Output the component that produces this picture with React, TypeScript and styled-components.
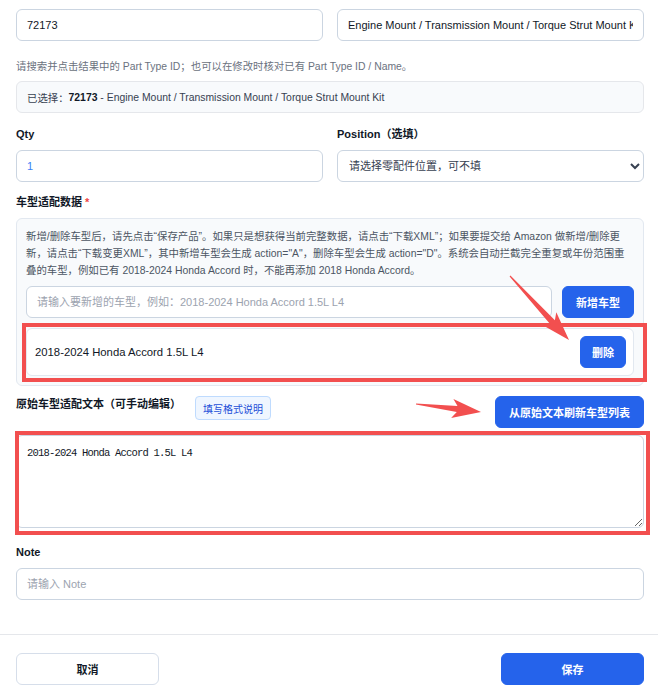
import { createGlobalStyle } from "styled-components";
import styled from "styled-components";

const GlobalStyle = createGlobalStyle`
  body {
    margin: 0;
    background: #fff;
    font-family: "Liberation Sans", "Noto Sans CJK SC", sans-serif;
    color: #111827;
  }
`;

const blue = "#2563eb";
const red = "#f24f4f";
const font = `"Liberation Sans", "Noto Sans CJK SC", sans-serif`;

type Pt = [number, number];

// callout arrow: thin tail, widening shaft, notched head
function arrowPath(tail: Pt, tip: Pt) {
  const dx = tip[0] - tail[0];
  const dy = tip[1] - tail[1];
  const len = Math.hypot(dx, dy);
  const u: Pt = [dx / len, dy / len];
  const n: Pt = [-u[1], u[0]];
  const at = (d: number, w: number): string =>
    `${(tip[0] - u[0] * d + n[0] * w).toFixed(1)} ${(tip[1] - u[1] * d + n[1] * w).toFixed(1)}`;
  return [
    `M${at(len, 0.6)}`,
    `L${at(24, 3)}`,
    `L${at(29, 9.5)}`,
    `L${at(0, 0)}`,
    `L${at(29, -9.5)}`,
    `L${at(24, -3)}`,
    `L${at(len, -0.6)}`,
    "Z",
  ].join(" ");
}

export default function App() {
  return (
    <Page>
      <GlobalStyle />
      <Form>
        <Grid>
          <Input defaultValue="72173" />
          <Input defaultValue="Engine Mount / Transmission Mount / Torque Strut Mount Kit" />
        </Grid>
        <Hint>请搜索并点击结果中的 Part Type ID；也可以在修改时核对已有 Part Type ID / Name。</Hint>
        <Selected>
          已选择：<b>72173</b> - Engine Mount / Transmission Mount / Torque Strut Mount Kit
        </Selected>

        <Grid $top={13}>
          <Field>
            <Label>Qty</Label>
            <Input defaultValue="1" $color="#3b82f6" />
          </Field>
          <Field>
            <Label>Position（选填）</Label>
            <Select defaultValue="">
              <option value="">请选择零配件位置，可不填</option>
            </Select>
          </Field>
        </Grid>

        <Field $top={12}>
          <Label>
            车型适配数据 <Star>*</Star>
          </Label>
          <Panel>
            <PanelText>
              新增/删除车型后，请先点击“保存产品”。如果只是想获得当前完整数据，请点击“下载XML”；如果要提交给 Amazon
              做新增/删除更新，请点击“下载变更XML”，其中新增车型会生成 action="A"，删除车型会生成
              action="D"。系统会自动拦截完全重复或年份范围重叠的车型，例如已有 2018-2024 Honda Accord 时，不能再添加 2018
              Honda Accord。
            </PanelText>
            <AddRow>
              <Input placeholder="请输入要新增的车型，例如：2018-2024 Honda Accord 1.5L L4" />
              <Button>新增车型</Button>
            </AddRow>
            <VehicleRow>
              <span>2018-2024 Honda Accord 1.5L L4</span>
              <Button $small>删除</Button>
              <Highlight $t={-6} $r={-14} $b={-7} $l={-5} />
            </VehicleRow>
          </Panel>
        </Field>

        <RawHead>
          <RawLeft>
            <Label $inline>原始车型适配文本（可手动编辑）</Label>
            <GhostButton>填写格式说明</GhostButton>
          </RawLeft>
          <Button>从原始文本刷新车型列表</Button>
        </RawHead>

        <TextBox>
          <TextArea defaultValue="2018-2024 Honda Accord 1.5L L4" />
          <Highlight $t={-4} $r={-6} $b={-7} $l={-1} />
        </TextBox>

        <Field $top={16}>
          <Label>Note</Label>
          <Input placeholder="请输入 Note" />
        </Field>
      </Form>

      <Footer>
        <Button $ghost>取消</Button>
        <Button $wide>保存</Button>
      </Footer>

      <Callouts width="658" height="694" viewBox="0 0 658 694">
        <path d={arrowPath([510, 276], [569, 340])} fill={red} />
        <path d={arrowPath([416, 404], [481, 412])} fill={red} />
      </Callouts>
    </Page>
  );
}

const Page = styled.div`
  position: relative;
  width: 658px;
  min-height: 694px;
`;

const Form = styled.div`
  padding: 9px 14px 34px 16px;
  display: flex;
  flex-direction: column;
`;

const Grid = styled.div<{ $top?: number }>`
  display: grid;
  grid-template-columns: 1fr 1fr;
  gap: 14px;
  margin-top: ${(p) => p.$top ?? 0}px;
`;

const Field = styled.div<{ $top?: number }>`
  display: flex;
  flex-direction: column;
  margin-top: ${(p) => p.$top ?? 0}px;
`;

const Label = styled.div<{ $inline?: boolean }>`
  font-size: 11px;
  font-weight: 700;
  color: #111827;
  line-height: 16px;
  margin-bottom: ${(p) => (p.$inline ? 0 : 8)}px;
`;

const Star = styled.span`
  color: #ef4444;
`;

const Input = styled.input<{ $color?: string }>`
  box-sizing: border-box;
  width: 100%;
  height: 32px;
  padding: 0 10px;
  border: 1px solid #cbd5e1;
  border-radius: 6px;
  font: 11px ${font};
  color: ${(p) => p.$color ?? "#111827"};
  background: #fff;
  outline: none;
  &::placeholder {
    color: #9ca3af;
  }
`;

const Select = styled.select`
  box-sizing: border-box;
  width: 100%;
  height: 32px;
  padding: 0 7px;
  border: 1px solid #cbd5e1;
  border-radius: 6px;
  font: 11px ${font};
  color: #374151;
  background: #fff;
`;

const Hint = styled.div`
  margin-top: 19px;
  font-size: 10.4px;
  color: #6b7280;
  line-height: 14px;
`;

const Selected = styled.div`
  margin-top: 7px;
  height: 32px;
  box-sizing: border-box;
  display: flex;
  align-items: center;
  padding: 0 10px;
  background: #f8fafc;
  border: 1px solid #e5e7eb;
  border-radius: 6px;
  font-size: 10.4px;
  color: #374151;
  white-space: pre;
  b {
    color: #111827;
  }
`;

const Panel = styled.div`
  box-sizing: border-box;
  display: flex;
  flex-direction: column;
  padding: 9px 9px 9px;
  background: #f8fafc;
  border: 1px solid #e2e8f0;
  border-radius: 6px;
`;

const PanelText = styled.div`
  font-size: 10.4px;
  line-height: 17px;
  color: #4b5563;
  margin-bottom: 7px;
`;

const AddRow = styled.div`
  display: flex;
  gap: 10px;
  align-items: center;
  margin-bottom: 10px;
`;

const Button = styled.button<{ $small?: boolean; $ghost?: boolean; $wide?: boolean }>`
  flex: none;
  height: 32px;
  width: ${(p) => (p.$ghost || p.$wide ? "143px" : "auto")};
  padding: 0 ${(p) => (p.$small ? 11 : 13)}px;
  border-radius: 6px;
  border: 1px solid ${(p) => (p.$ghost ? "#d6deea" : blue)};
  background: ${(p) => (p.$ghost ? "#fff" : blue)};
  color: ${(p) => (p.$ghost ? "#111827" : "#fff")};
  font: 700 11px ${font};
`;

const GhostButton = styled.button`
  height: 24px;
  padding: 0 7px;
  border-radius: 4px;
  border: 1px solid #bfdbfe;
  background: #eff6ff;
  color: #1d4ed8;
  font: 10px ${font};
`;

const VehicleRow = styled.div`
  position: relative;
  height: 48px;
  box-sizing: border-box;
  display: flex;
  align-items: center;
  justify-content: space-between;
  padding: 0 7px 0 8px;
  background: #fff;
  border: 1px solid #e2e8f0;
  border-radius: 6px;
  font-size: 11.3px;
  color: #111827;
`;

// red frame drawn over a block to call it out
const Highlight = styled.div<{ $t: number; $r: number; $b: number; $l: number }>`
  position: absolute;
  top: ${(p) => p.$t}px;
  right: ${(p) => p.$r}px;
  bottom: ${(p) => p.$b}px;
  left: ${(p) => p.$l}px;
  border: 4px solid ${red};
  pointer-events: none;
`;

const Callouts = styled.svg`
  position: absolute;
  top: 0;
  left: 0;
  pointer-events: none;
`;

const RawHead = styled.div`
  display: flex;
  justify-content: space-between;
  align-items: flex-start;
  margin-top: 10px;
`;

const RawLeft = styled.div`
  display: flex;
  align-items: flex-start;
  gap: 14px;
`;

const TextBox = styled.div`
  position: relative;
  margin-top: 7px;
  display: flex;
`;

const TextArea = styled.textarea`
  box-sizing: border-box;
  width: 100%;
  height: 93px;
  padding: 11px 10px;
  border: 1px solid #cbd5e1;
  border-radius: 6px;
  font: 10.5px "Liberation Mono", monospace;
  letter-spacing: -0.8px;
  color: #111827;
  outline: none;
`;

const Footer = styled.div`
  display: flex;
  justify-content: space-between;
  padding: 18px 14px 11px 16px;
  border-top: 1px solid #e5e7eb;
`;
